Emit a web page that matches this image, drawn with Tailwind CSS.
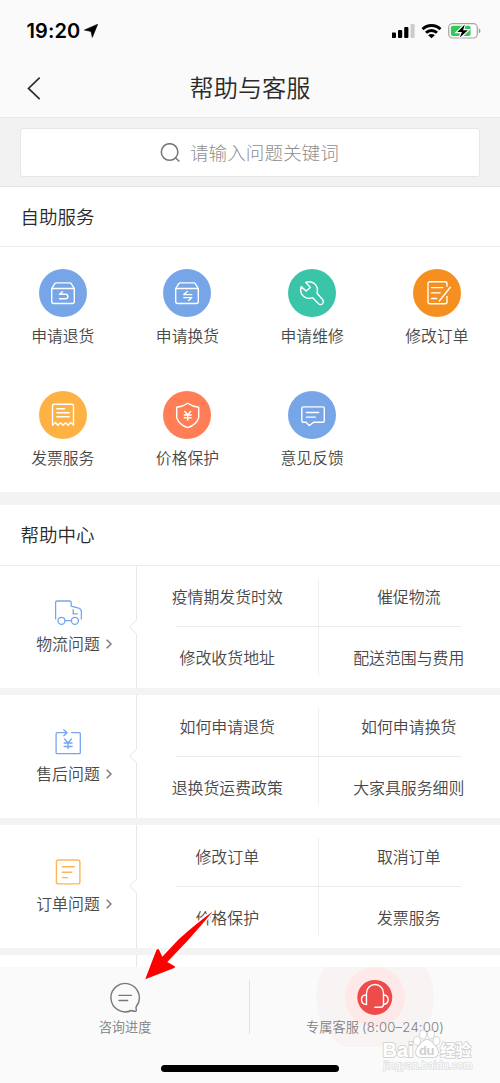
<!DOCTYPE html>
<html lang="zh-CN">
<head>
<meta charset="utf-8">
<title>帮助与客服</title>
<script src="https://cdn.jsdelivr.net/npm/@tailwindcss/browser@4"></script>
</head>
<body class="relative flex h-[1083px] w-[500px] flex-col overflow-hidden bg-white font-['Noto_Sans_CJK_SC',sans-serif] font-[350] text-[#484848]">

<!-- status bar and title -->
<header class="h-[118px] shrink-0 border-b border-[#e8e8e8] bg-[#fafafa]">
  <div class="flex h-[62px] items-center justify-between pl-[26.5px] pr-[18px]">
    <div class="flex items-center gap-1">
      <span class="font-[Inter,sans-serif] text-[20px] font-semibold tracking-[0.100px] text-black">19:20</span>
      <svg class="h-[14px] w-[14px]" viewBox="0 0 14 14"><path d="M13.700.2 8.300 13.400 7 7.400.4 6.100Z" stroke="#000" stroke-width=".6" stroke-linejoin="round"/></svg>
    </div>
    <div class="flex items-center">
      <svg class="h-[20px] w-[90px]" viewBox="392 21 90 20">
        <rect x="391.800" y="32.500" width="4.200" height="5.500" rx="1"/><rect x="398" y="30" width="4.200" height="8" rx="1"/><rect x="404.200" y="27" width="4.200" height="11" rx="1"/><rect x="410.500" y="24" width="4.200" height="14" rx="1" fill="#ccc"/>
        <g fill="none" stroke="#000" stroke-width="3"><path d="M422.600 29.200a12.400 12.400 0 0 1 17.800 0"/><path d="M426 32.700a7.800 7.800 0 0 1 11 0"/></g>
        <path d="M428.200 35.300a4.700 4.700 0 0 1 6.600 0L431.500 38.300Z"/>
        <rect x="448.700" y="23.700" width="28.600" height="14.300" rx="4" fill="#fff" stroke="#a3a3a3" stroke-width="1.200"/>
        <path d="M478.800 28.300q3.400 2.600 0 5.200Z" fill="#999"/>
        <rect x="450.800" y="25.700" width="19.800" height="10.300" rx="2" fill="#34c759"/>
        <path d="m464.800 24.500-7.500 7.500h4.600l-2.200 5.800 8.200-7.600h-4.800Z" stroke="#fff" stroke-width="2.400" paint-order="stroke"/>
      </svg>
    </div>
  </div>
  <div class="flex h-[52px] items-center pl-[27px]">
    <svg class="h-6 w-[14px]" viewBox="0 0 14 24" fill="none" stroke="#2e2e2e" stroke-width="1.700"><path d="M12.700 1.700 1.500 12.400 12.700 23.200"/></svg>
    <h1 class="flex-1 pr-[41px] text-center text-[24.200px] font-[350] leading-[36px] text-[#2a2a2a]"><span class="block pb-[3px]">帮助与客服</span></h1>
  </div>
</header>

<div class="h-[69px] shrink-0 border-b border-[#e6e6e6] bg-[#f2f2f2] px-5 pt-[10px]">
  <div class="flex h-[49px] items-center gap-[10px] rounded-[3px] border border-[#e6e6e6] bg-white pl-[139px]">
    <svg class="h-5 w-5" viewBox="0 0 20 20" fill="none" stroke="#757575" stroke-width="1.500"><circle cx="9.600" cy="9" r="8.300"/><path d="m15.400 14.800 4 3.700"/></svg>
    <span class="pb-[2px] text-[18.600px] font-light text-[#8e8e8e]">请输入问题关键词</span>
  </div>
</div>

<section class="shrink-0">
  <h2 class="flex h-[60px] items-center border-b border-[#ececec] pl-[20.500px] text-[18.500px] font-[350] text-[#2a2a2a]">自助服务</h2>
  <div class="ml-[0.4px] grid h-[245px] w-[498.8px] grid-cols-4 grid-rows-[122px_122px] pt-[22px] text-[15.800px] leading-6">
    <div class="flex flex-col items-center gap-[7px]">
      <svg class="h-12 w-12" viewBox="0 0 48 48" fill="none" stroke="#fff" stroke-width="1.400" stroke-linejoin="round" stroke-linecap="round"><circle cx="24" cy="24" r="24" fill="#76a5e8" stroke="none"/><path d="M12.700 19.500h22.600v13q0 2-2 2H14.700q-2 0-2-2ZM12.700 19.500l2.900-4.700q.6-.9 1.800-.9h13.200q1.200 0 1.800.9l2.900 4.700M23.400 22.800 20.500 25.300h6.200a2 2 0 0 1 0 4.400h-6.200"/></svg>
      <span>申请退货</span>
    </div>
    <div class="flex flex-col items-center gap-[7px]">
      <svg class="h-12 w-12" viewBox="0 0 48 48" fill="none" stroke="#fff" stroke-width="1.400" stroke-linejoin="round" stroke-linecap="round"><circle cx="24" cy="24" r="24" fill="#76a5e8" stroke="none"/><path d="M12.700 19.500h22.600v13q0 2-2 2H14.700q-2 0-2-2ZM12.700 19.500l2.900-4.700q.6-.9 1.800-.9h13.200q1.200 0 1.800.9l2.900 4.700M24.300 22.500 20.800 25.600h8M20.800 28.600h8l-3.200 3"/></svg>
      <span>申请换货</span>
    </div>
    <div class="flex flex-col items-center gap-[7px]">
      <svg class="h-12 w-12" viewBox="0 0 48 48" fill="none" stroke="#fff" stroke-width="1.400" stroke-linejoin="round" stroke-linecap="round"><circle cx="24" cy="24" r="24" fill="#3bc5a8" stroke="none"/><path d="M17.700 13.300q4.800-1.700 8.700 1.200 4.400 4 2.600 9.700l5.500 6.300q1.900 2.300 0 4.300-2.100 1.800-4.200-.3l-5.600-5.800q-5.200 1.900-9.200-1.400-4-3.700-2.400-9.700l5.200 4.500 4-3.700Z"/></svg>
      <span>申请维修</span>
    </div>
    <div class="flex flex-col items-center gap-[7px]">
      <svg class="h-12 w-12" viewBox="0 0 48 48" fill="none" stroke="#fff" stroke-width="1.400" stroke-linejoin="round" stroke-linecap="round"><circle cx="24" cy="24" r="24" fill="#f58f1f" stroke="none"/><path d="M34 17.300v-2.500q0-2-2-2H17q-2 0-2 2v17.900q0 2 2 2h15q2 0 2-2v-5.200M18.500 18.600h11.300M18.500 23.900h8.600M18.500 29.500h5.200M37.300 18.300 26.300 32"/></svg>
      <span>修改订单</span>
    </div>
    <div class="flex flex-col items-center gap-[7px]">
      <svg class="h-12 w-12" viewBox="0 0 48 48" fill="none" stroke="#fff" stroke-width="1.400" stroke-linejoin="round" stroke-linecap="round"><circle cx="24" cy="24" r="24" fill="#feb244" stroke="none"/><path d="M13.500 34V15q0-1.700 1.700-1.700h17.600q1.700 0 1.700 1.700v19l-2.900-2.500-2.500 2.700-2.600-2.500-2.500 2.500-2.500-2.500-2.600 2.500-2.500-2.700ZM17.800 17.700h7.700M17.800 21.700h12.400M17.800 25.700h12.400"/></svg>
      <span>发票服务</span>
    </div>
    <div class="flex flex-col items-center gap-[7px]">
      <svg class="h-12 w-12" viewBox="0 0 48 48" fill="none" stroke="#fff" stroke-width="1.400" stroke-linejoin="round" stroke-linecap="round"><circle cx="24" cy="24" r="24" fill="#ff7e56" stroke="none"/><path d="M24.700 12.200q4.900 3.500 11 4v10.500q-2.600 7.300-11 10-8.400-2.700-11-10V16.200q6.100-.5 11-4ZM21.800 20.500l2.900 3.200 3-3.200M21.300 24h6.900M21.300 26.700h6.900M24.700 23.700v5.600"/></svg>
      <span>价格保护</span>
    </div>
    <div class="flex flex-col items-center gap-[7px]">
      <svg class="h-12 w-12" viewBox="0 0 48 48" fill="none" stroke="#fff" stroke-width="1.400" stroke-linejoin="round" stroke-linecap="round"><circle cx="24" cy="24" r="24" fill="#76a5e8" stroke="none"/><path d="M15.300 15.900h19.500q1.500 0 1.500 1.500v12.300q0 1.500-1.500 1.500H26L21.200 34.500 18 31.200h-2.700q-1.500 0-1.500-1.500V17.400q0-1.500 1.500-1.500ZM18.300 21.500h12.300M18.300 26.100h9"/></svg>
      <span>意见反馈</span>
    </div>
  </div>
</section>

<section class="shrink-0 border-t-[13px] border-[#f3f3f3]">
  <h2 class="flex h-[61px] items-center border-b border-[#ececec] pl-[20.500px] text-[18.500px] font-[350] text-[#2a2a2a]">帮助中心</h2>

  <div class="flex h-[129px] border-b-[7px] border-[#f3f3f3] text-[15.900px] leading-6">
    <div class="relative flex w-[137px] flex-col items-center border-r border-[#e8e8e8] pt-[33px]">
      <svg class="h-7 w-7" viewBox="0 0 28 28" fill="none" stroke="#76a5ee" stroke-width="1.300" stroke-linejoin="round" stroke-linecap="round"><path d="M1.600 19.900V3.500Q1.600 2 3.100 2h12.600q1.500 0 1.500 1.500v3.600l7.500 2q2.700.8 2.700 3.500v7.300M10.900 21.700h6.600M19.200 10.700v4.200h4.100"/><circle cx="7.500" cy="21.800" r="3.500"/><circle cx="20.900" cy="21.800" r="3.500"/></svg>
      <div class="mt-[5px] flex items-center gap-[6px] pl-[12px]"><span>物流问题</span><svg class="h-[10px] w-[6px]" viewBox="0 0 6 10" fill="none" stroke="#777" stroke-width="1.400"><path d="m.7.700 4.300 4.300L.7 9.300"/></svg></div>
      <svg class="absolute -right-px top-[53px] h-4 w-2" viewBox="0 0 8 16" fill="#fff" stroke="#e4e4e4"><path d="M8 .5.700 8 8 15.500"/></svg>
    </div>
    <div class="grid flex-1 grid-cols-2 grid-rows-2 text-center">
      <div class="flex flex-col justify-between pt-[13px]"><div class="flex h-[47px] items-center justify-center border-r border-[#efefef] pb-3">疫情期发货时效</div><div class="ml-[39px] h-px bg-[#ebebeb]"></div></div>
      <div class="flex flex-col justify-between pt-[13px]"><div class="flex h-[47px] items-center justify-center pb-3 pr-px">催促物流</div><div class="mr-[39px] h-px bg-[#ebebeb]"></div></div>
      <div class="pb-[13px]"><div class="flex h-12 items-center justify-center border-r border-[#efefef] pt-[14px]">修改收货地址</div></div>
      <div class="pb-[13px]"><div class="flex h-12 items-center justify-center pr-px pt-[14px]">配送范围与费用</div></div>
    </div>
  </div>

  <div class="flex h-[130px] border-b-[7px] border-[#f3f3f3] text-[15.900px] leading-6">
    <div class="relative flex w-[137px] flex-col items-center border-r border-[#e8e8e8] pt-[34px]">
      <svg class="h-7 w-7" viewBox="0 0 28 28" fill="none" stroke="#76a5ee" stroke-width="1.300" stroke-linejoin="round" stroke-linecap="round"><path d="M12.900 3.700H3.100q-1 0-1 1v19q0 1 1 1h22.200q1 0 1-1v-19q0-1-1-1h-7.700M9.800.8l3.300 2.900-3.300 3M10.600 10l3.400 4 3.400-4M10.100 14h8M10.100 17.500h8M14.100 14v5.700"/></svg>
      <div class="mt-[5px] flex items-center gap-[6px] pl-[12px]"><span>售后问题</span><svg class="h-[10px] w-[6px]" viewBox="0 0 6 10" fill="none" stroke="#777" stroke-width="1.400"><path d="m.7.700 4.300 4.300L.7 9.300"/></svg></div>
      <svg class="absolute -right-px top-[53px] h-4 w-2" viewBox="0 0 8 16" fill="#fff" stroke="#e4e4e4"><path d="M8 .5.700 8 8 15.500"/></svg>
    </div>
    <div class="grid flex-1 grid-cols-2 grid-rows-2 text-center">
      <div class="flex flex-col justify-between pt-[13px]"><div class="flex h-[48px] items-center justify-center border-r border-[#efefef] pb-[10px]">如何申请退货</div><div class="ml-[39px] h-px bg-[#ebebeb]"></div></div>
      <div class="flex flex-col justify-between pt-[13px]"><div class="flex h-[48px] items-center justify-center pb-[10px] pr-px">如何申请换货</div><div class="mr-[39px] h-px bg-[#ebebeb]"></div></div>
      <div class="pb-[13px]"><div class="flex h-12 items-center justify-center border-r border-[#efefef] pt-[14px]">退换货运费政策</div></div>
      <div class="pb-[13px]"><div class="flex h-12 items-center justify-center pr-px pt-[14px]">大家具服务细则</div></div>
    </div>
  </div>

  <div class="flex h-[130px] border-b-[7px] border-[#f3f3f3] text-[15.900px] leading-6">
    <div class="relative flex w-[137px] flex-col items-center border-r border-[#e8e8e8] pt-[34px]">
      <svg class="h-7 w-7" viewBox="0 0 28 28" fill="none" stroke="#fdb655" stroke-width="1.400" stroke-linejoin="round" stroke-linecap="round"><rect x="2.400" y="1" width="23.500" height="23.900" rx="2"/><path d="M8.300 7.800h12.100M8.300 13.300h9.400M8.300 18.600h5.400"/></svg>
      <div class="mt-[5px] flex items-center gap-[6px] pl-[12px]"><span>订单问题</span><svg class="h-[10px] w-[6px]" viewBox="0 0 6 10" fill="none" stroke="#777" stroke-width="1.400"><path d="m.7.700 4.300 4.300L.7 9.300"/></svg></div>
      <svg class="absolute -right-px top-[53px] h-4 w-2" viewBox="0 0 8 16" fill="#fff" stroke="#e4e4e4"><path d="M8 .5.700 8 8 15.500"/></svg>
    </div>
    <div class="grid flex-1 grid-cols-2 grid-rows-2 text-center">
      <div class="flex flex-col justify-between pt-[13px]"><div class="flex h-[48px] items-center justify-center border-r border-[#efefef] pb-[10px]">修改订单</div><div class="ml-[39px] h-px bg-[#ebebeb]"></div></div>
      <div class="flex flex-col justify-between pt-[13px]"><div class="flex h-[48px] items-center justify-center pb-[10px] pr-px">取消订单</div><div class="mr-[39px] h-px bg-[#ebebeb]"></div></div>
      <div class="pb-[13px]"><div class="flex h-12 items-center justify-center border-r border-[#efefef] pt-[14px]">价格保护</div></div>
      <div class="pb-[13px]"><div class="flex h-12 items-center justify-center pr-px pt-[14px]">发票服务</div></div>
    </div>
  </div>
  <div class="h-3 w-[137px] border-r border-[#e8e8e8]"></div>
</section>

<!-- bottom bar -->
<footer class="relative flex flex-1 overflow-hidden bg-[#fafafa] text-[13.200px] leading-5 text-[#808080]">
  <div class="flex w-[250px] flex-col items-center pt-[15px]">
    <svg class="h-8 w-8" viewBox="0 0 32 32" fill="none" stroke="#777" stroke-width="1.400" stroke-linecap="round" stroke-linejoin="round"><path d="M22.200 28.500A14.200 14.200 0 1 1 27.400 24.300c-1 1.400.2 2.600-.2 4.600-.2 1-3.200.2-5-.4ZM10 13.400h12.300M10 18.500h8.600"/></svg>
    <span class="mt-[3px]">咨询进度</span>
  </div>
  <div class="-ml-px mt-[13px] h-[54px] w-px bg-[#e2e2e2]"></div>
  <div class="relative flex flex-1 flex-col items-center pt-3">
    <svg class="absolute left-[66px] top-0 h-20 w-[118px]" viewBox="0 0 118 80"><circle cx="59" cy="30" r="59" fill="#f9f4f4"/><circle cx="59" cy="30" r="30" fill="#ffe8e8"/></svg>
    <svg class="relative h-9 w-9" viewBox="0 0 36 36" fill="none" stroke="#fff" stroke-width="1.400" stroke-linecap="round"><circle cx="17.800" cy="18.400" r="17.500" fill="#ee4b4b" stroke="none"/><path d="M9.500 17v8.500q-5-.2-5-5t5-4.500v-2a8.500 8.500 0 0 1 17 0v2q4.600 0 4.600 4.500t-4.600 5V17M26.500 25.500q-.2 2.800-2.700 2.800h-6"/></svg>
    <span class="relative mt-[2px] whitespace-nowrap tracking-[0.100px]">专属客服 <span class="font-['Inter',sans-serif] font-light tracking-[0.160px]">(8:00–24:00)</span></span>
  </div>
  <div class="absolute left-[161px] top-[98px] h-[7px] w-[178px] rounded-full bg-black"></div>
</footer>

<!-- watermark -->
<svg class="absolute left-[380px] top-[1028px] h-[48px] w-[100px]" viewBox="380 1028 100 48" fill="#fff" stroke="#d2d2d2" stroke-width="1.800" paint-order="stroke" stroke-linejoin="round" font-family="Liberation Sans, sans-serif">
  <text x="382.500" y="1056.500" font-size="20" font-weight="700" textLength="31">Bai</text>
  <ellipse cx="417" cy="1041" rx="3" ry="4"/><ellipse cx="423" cy="1034.500" rx="3" ry="4"/><ellipse cx="431" cy="1034.500" rx="3" ry="4"/><ellipse cx="436.500" cy="1041" rx="3" ry="4"/>
  <path d="M427 1040q3.500 0 7 5 4 4 4 7 0 5-5 5h-12q-5 0-5-5 0-3 4-7 3.500-5 7-5Z"/>
  <text x="419" y="1055" font-size="13" font-weight="700" fill="#cfcfcf" stroke="none" textLength="15.500">du</text>
  <text x="440" y="1056" font-size="15.500" font-weight="700" font-family="Noto Sans CJK SC, sans-serif" textLength="31">经验</text>
  <text x="383.500" y="1069" font-size="11" stroke="#dedede" stroke-width="1.400" textLength="89">jingyan.baidu.com</text>
</svg>

<!-- red pointer -->
<svg class="absolute left-[140px] top-[905px] h-[80px] w-[80px]" viewBox="140 905 80 80"><path d="M213 911.300Q197 923 178.500 939.500L162.300 956.700 159.300 950.300q-1.300-2.200-2.900-.3L145.200 979.300 173.600 968.300q2.400-1.200.6-2.400L167.300 962 187.300 941Q201 926 213 911.300Z" fill="#f00" stroke="#fff" stroke-width="3" stroke-linejoin="round" paint-order="stroke"/></svg>
</body>
</html>
